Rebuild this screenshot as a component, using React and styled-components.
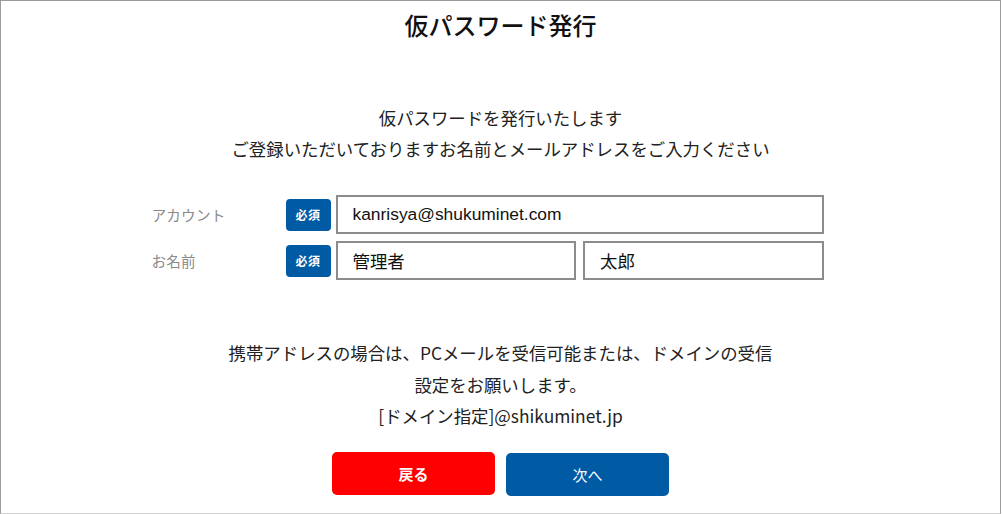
import React from "react";
import styled, { createGlobalStyle } from "styled-components";

const GlobalStyle = createGlobalStyle`
  html, body {
    margin: 0;
    padding: 0;
    background: #fff;
  }
  body {
    font-family: "Noto Sans CJK JP", "Noto Sans", sans-serif;
    color: #222;
  }
`;

const Frame = styled.div`
  box-sizing: border-box;
  width: 1001px;
  height: 514px;
  border: 1px solid #9a9a9a;
  border-bottom: 1px solid #d2d2d2;
  overflow: hidden;
`;

const Title = styled.h1`
  margin: 6px 0 0;
  font-size: 24px;
  line-height: 36px;
  font-weight: 500;
  text-align: center;
  color: #111;
`;

const Lead = styled.p`
  margin: 59px 0 0;
  font-size: 17.4px;
  line-height: 31px;
  text-align: center;
  color: #222;
`;

const Form = styled.div`
  box-sizing: border-box;
  width: 698px;
  margin: 31px auto 0;
  padding-right: 26px;
  display: flex;
  flex-direction: column;
  gap: 7px;
`;

const Row = styled.div`
  display: grid;
  grid-template-columns: 129px 45px 1fr;
  align-items: center;
  column-gap: 5px;
`;

const Label = styled.div`
  font-size: 14.6px;
  letter-spacing: 0.2px;
  color: #8a8a8a;
`;

const Badge = styled.span`
  display: flex;
  align-items: center;
  justify-content: center;
  height: 32px;
  border-radius: 4px;
  background: #005ba4;
  color: #fff;
  font-size: 12px;
  font-weight: 700;
  letter-spacing: 0.5px;
`;

const Fields = styled.div`
  display: grid;
  grid-template-columns: ${(p) => (p.split ? "1fr 1fr" : "1fr")};
  column-gap: 7px;
`;

const Input = styled.input`
  box-sizing: border-box;
  width: 100%;
  height: 39px;
  border: 2px solid #8c8c8c;
  padding: 0 15px;
  font-family: "Liberation Sans", "Noto Sans CJK JP", sans-serif;
  font-size: 17.4px;
  color: #111;
  background: #fff;
  outline: none;
`;

const Notice = styled.p`
  margin: 57px 0 0;
  font-size: 17.4px;
  line-height: 31.5px;
  text-align: center;
  color: #222;
`;

const Buttons = styled.div`
  display: flex;
  justify-content: center;
  gap: 11px;
  margin-top: 20px;
`;

const Button = styled.button`
  width: 163px;
  height: 43px;
  border: none;
  border-radius: 5px;
  background: ${(p) => (p.variant === "back" ? "#ff0000" : "#005ba4")};
  color: #fff;
  font-family: "Noto Sans CJK JP", sans-serif;
  font-size: 15px;
  font-weight: ${(p) => (p.variant === "back" ? 700 : 400)};
  margin-top: ${(p) => (p.variant === "back" ? "0" : "1px")};
  cursor: pointer;
`;

const App = () => {
  return (
    <Frame>
      <GlobalStyle />
      <Title>仮パスワード発行</Title>
      <Lead>
        仮パスワードを発行いたします
        <br />
        ご登録いただいておりますお名前とメールアドレスをご入力ください
      </Lead>
      <Form>
        <Row>
          <Label>アカウント</Label>
          <Badge>必須</Badge>
          <Fields>
            <Input defaultValue="kanrisya@shukuminet.com" />
          </Fields>
        </Row>
        <Row>
          <Label>お名前</Label>
          <Badge>必須</Badge>
          <Fields split>
            <Input defaultValue="管理者" />
            <Input defaultValue="太郎" />
          </Fields>
        </Row>
      </Form>
      <Notice>
        携帯アドレスの場合は、PCメールを受信可能または、ドメインの受信
        <br />
        設定をお願いします。
        <br />
        [ドメイン指定]@shikuminet.jp
      </Notice>
      <Buttons>
        <Button variant="back">戻る</Button>
        <Button variant="next">次へ</Button>
      </Buttons>
    </Frame>
  );
};

export default App;
